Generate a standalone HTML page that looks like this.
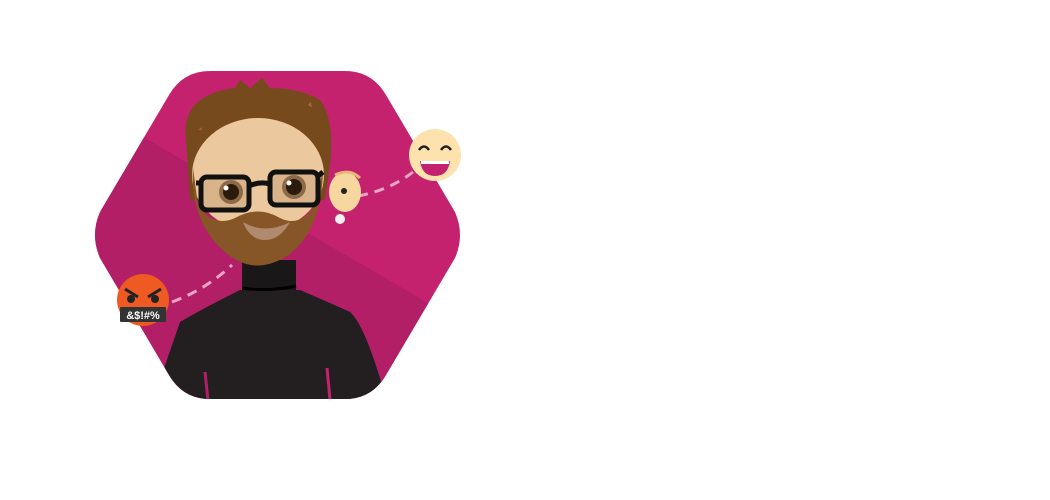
<!DOCTYPE html>
<html><head><meta charset="utf-8"><style>
html,body{margin:0;padding:0;background:#fff;width:1050px;height:500px;overflow:hidden}
svg{display:block}
</style></head><body>
<svg width="1050" height="500" viewBox="0 0 1050 500" xmlns="http://www.w3.org/2000/svg">
<defs>
<clipPath id="hex"><path d="M210 71 L345 71 Q372 71 386 95 L455 212 Q465 235 455 258 L386 375 Q372 399 345 399 L210 399 Q183 399 169 375 L100 258 Q90 235 100 212 L169 95 Q183 71 210 71 Z"/></clipPath>
</defs>
<g clip-path="url(#hex)">
<rect x="80" y="60" width="400" height="350" fill="#c4226e"/>
<path d="M80 120 L140 135 L440 310 L480 330 L480 410 L80 410 Z" fill="#b31f67"/>
</g>
<path d="M172 302 Q205 290 232 265" stroke="#e8a5c6" stroke-width="3" fill="none" stroke-dasharray="10 7"/>
<path d="M358 196 Q390 190 413 172" stroke="#e8a5c6" stroke-width="3" fill="none" stroke-dasharray="10 7"/>
<g>
<ellipse cx="345" cy="192" rx="16" ry="20" fill="#f7d7a0"/>
<path d="M335 175 Q350 168 360 178" stroke="#e9b878" stroke-width="3" fill="none"/>
<circle cx="344" cy="191" r="3" fill="#222"/>
<circle cx="340" cy="219" r="5" fill="#f4f0ea"/>
</g>
<g clip-path="url(#hex)">
<path d="M160 380 L180 322 Q200 310 240 290 L300 290 Q335 305 350 312 Q365 325 385 395 L385 420 L160 420 Z" fill="#231f20"/>
<path d="M205 372 L209 410" stroke="#b31f67" stroke-width="3"/>
<path d="M327 368 L331 410" stroke="#c4226e" stroke-width="3"/>
</g>
<rect x="242" y="260" width="54" height="30" fill="#1a1718"/>
<path d="M242 288 Q268 292 296 286" stroke="#000" stroke-width="3" fill="none"/>
<path d="M186 140 Q180 95 235 88 L240 80 L250 88 L262 78 L270 88 Q300 88 320 100 Q335 120 330 165 L325 200 L190 200 Z" fill="#774a1e"/>
<path d="M200 130 Q205 108 222 118 M250 112 L258 100 L264 112 M300 115 L310 105 L312 120" stroke="#a5663a" stroke-width="3" fill="none"/>
<ellipse cx="258" cy="175" rx="66" ry="57" fill="#ebc89d"/>
<path d="M193 168 Q190 222 225 252 Q255 278 290 254 Q322 228 323 170 L315 205 Q300 228 280 218 Q258 205 235 218 Q213 228 198 205 Z" fill="#865627"/>
<path d="M243 222 Q265 235 290 222 Q280 240 265 240 Q250 240 243 222 Z" fill="#b08a6e"/>
<path d="M190 140 Q200 118 255 115 Q315 118 325 145 L326 125 Q315 95 255 95 Q200 95 188 125 Z" fill="#774a1e"/>
<rect x="201" y="177" width="48" height="33" rx="6" fill="#d9b48a" stroke="#111" stroke-width="5"/>
<rect x="270" y="172" width="48" height="33" rx="6" fill="#d9b48a" stroke="#111" stroke-width="5"/>
<path d="M249 186 Q260 181 270 184 M196 183 L203 183 M318 176 L323 172" stroke="#111" stroke-width="5" fill="none"/>
<circle cx="231" cy="192" r="12" fill="#8d6a47"/><circle cx="231" cy="192" r="8" fill="#2b1b0c"/><circle cx="226" cy="188" r="2.5" fill="#fff"/>
<circle cx="294" cy="187" r="12" fill="#8d6a47"/><circle cx="294" cy="187" r="8" fill="#2b1b0c"/><circle cx="289" cy="183" r="2.5" fill="#fff"/>
<circle cx="435" cy="155" r="26" fill="#fde2ae"/>
<path d="M419 150 Q424 143 429 150 M441 150 Q446 143 451 150" stroke="#222" stroke-width="2.5" fill="none"/>
<path d="M420 161 L450 161 Q448 176 435 176 Q422 176 420 161 Z" fill="#c4226e"/>
<rect x="421" y="161" width="28" height="3" fill="#fff"/>
<circle cx="143" cy="300" r="26" fill="#ef5922"/>
<path d="M125 289 L138 297 M161 289 L148 297" stroke="#222" stroke-width="3"/>
<circle cx="131" cy="299" r="4" fill="#222"/><circle cx="155" cy="299" r="4" fill="#222"/>
<rect x="120" y="307" width="46" height="15" rx="1" fill="#333"/>
<text x="143" y="319" text-anchor="middle" font-family="Liberation Sans, sans-serif" font-size="11" font-weight="bold" fill="#fff">&amp;$!#%</text>
</svg>
</body></html>
